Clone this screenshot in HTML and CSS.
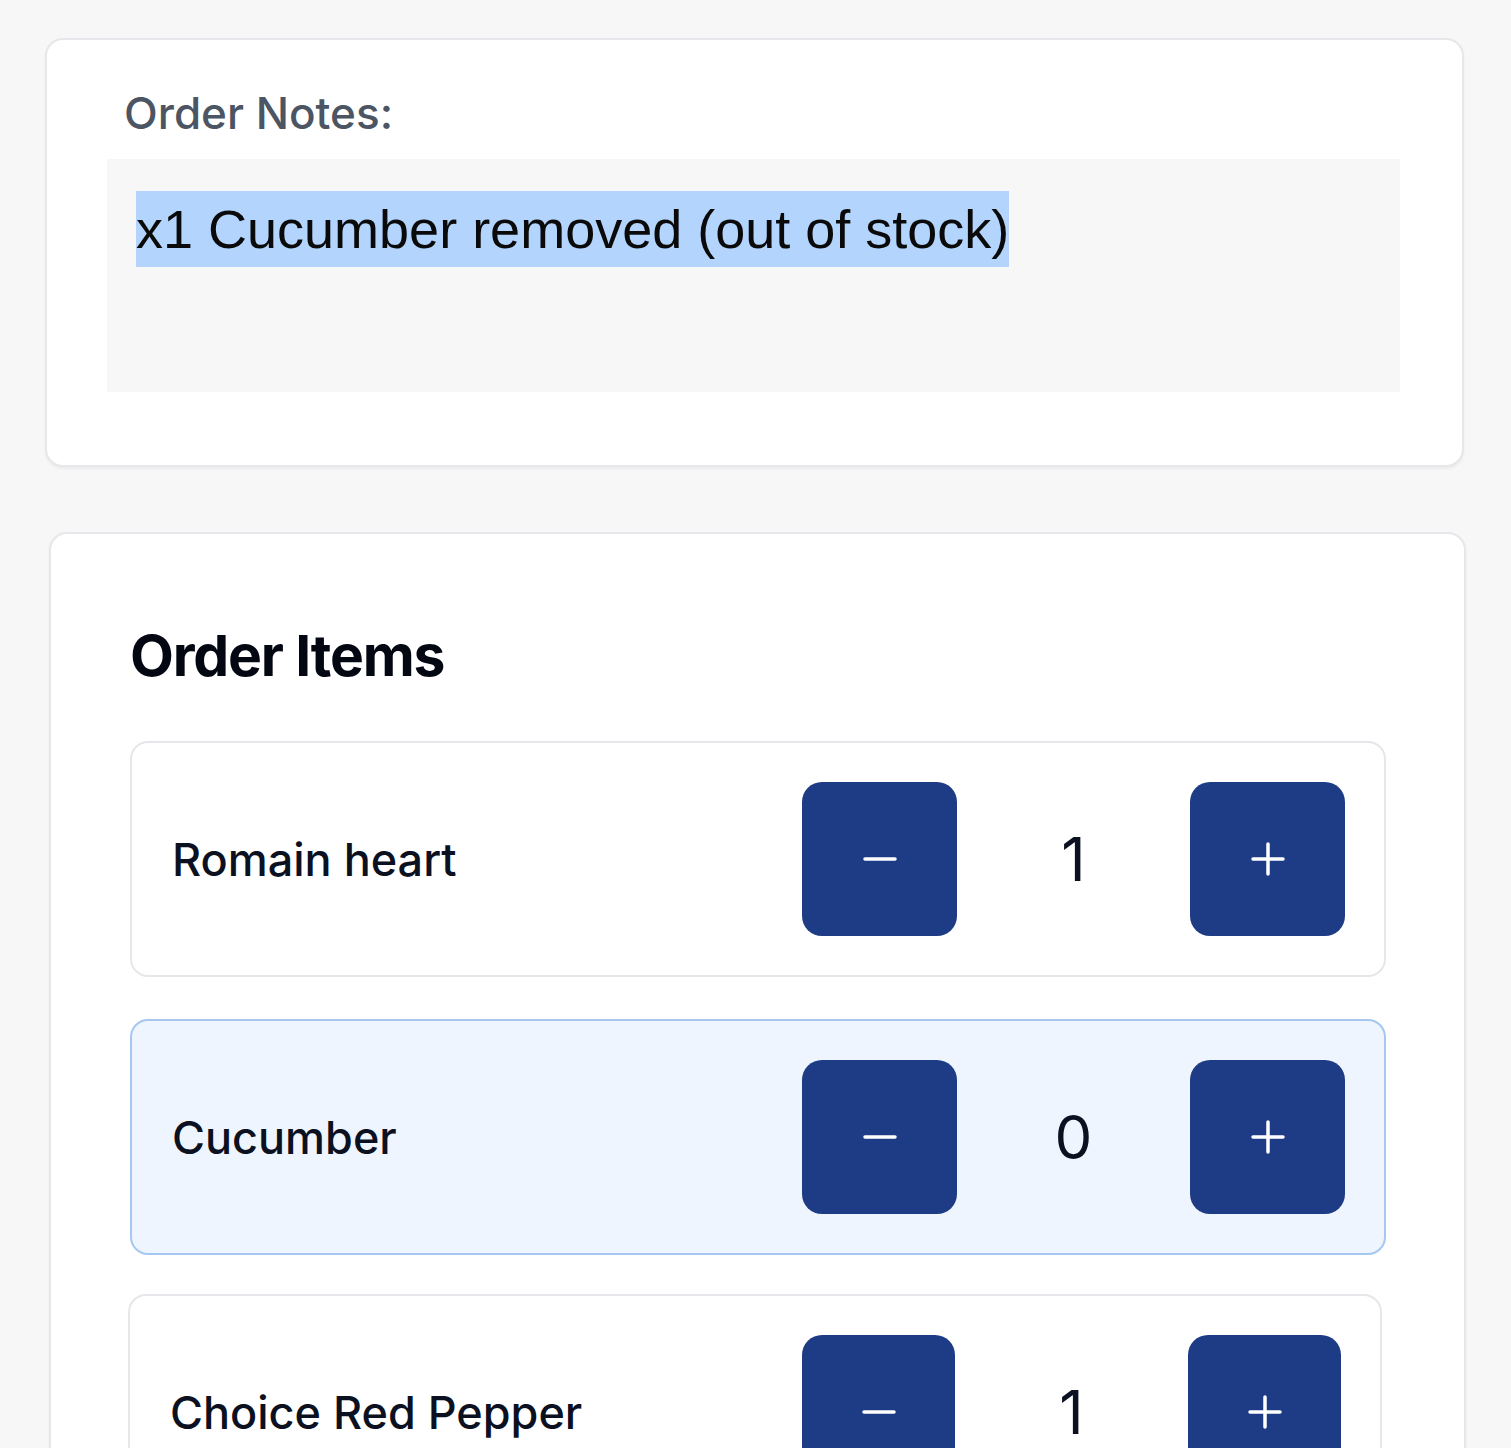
FILE: index.html
```html
<!DOCTYPE html>
<html lang="en">
<head>
<meta charset="utf-8">
<title>Order</title>
<link rel="stylesheet" href="styles.css">
</head>
<body>
<main class="page">
  <section class="card notes-card">
    <label class="notes-label">Order Notes:</label>
    <div class="notes-box"><span class="selected">x1 Cucumber removed (out of stock)</span></div>
  </section>

  <section class="card items-card">
    <h2 class="items-title">Order Items</h2>
    <div class="items">
      <div class="item">
        <span class="item-name">Romain heart</span>
        <div class="stepper">
          <button class="step-btn" aria-label="decrease"><svg viewBox="0 0 40 40"><line x1="5" y1="20" x2="35" y2="20"/></svg></button>
          <span class="qty">1</span>
          <button class="step-btn" aria-label="increase"><svg viewBox="0 0 40 40"><line x1="5" y1="20" x2="35" y2="20"/><line x1="20" y1="5" x2="20" y2="35"/></svg></button>
        </div>
      </div>
      <div class="item item-active">
        <span class="item-name">Cucumber</span>
        <div class="stepper">
          <button class="step-btn" aria-label="decrease"><svg viewBox="0 0 40 40"><line x1="5" y1="20" x2="35" y2="20"/></svg></button>
          <span class="qty">0</span>
          <button class="step-btn" aria-label="increase"><svg viewBox="0 0 40 40"><line x1="5" y1="20" x2="35" y2="20"/><line x1="20" y1="5" x2="20" y2="35"/></svg></button>
        </div>
      </div>
      <div class="item item-last">
        <span class="item-name">Choice Red Pepper</span>
        <div class="stepper">
          <button class="step-btn" aria-label="decrease"><svg viewBox="0 0 40 40"><line x1="5" y1="20" x2="35" y2="20"/></svg></button>
          <span class="qty">1</span>
          <button class="step-btn" aria-label="increase"><svg viewBox="0 0 40 40"><line x1="5" y1="20" x2="35" y2="20"/><line x1="20" y1="5" x2="20" y2="35"/></svg></button>
        </div>
      </div>
    </div>
  </section>
</main>
</body>
</html>
```

FILE: styles.css
```css
* { box-sizing: border-box; }

html, body {
  margin: 0;
  background: #f7f7f7;
  font-family: Inter, "Noto Sans", "Liberation Sans", sans-serif;
  color: #0b1120;
}

.page {
  padding: 38px 47px 0 45px;
  display: flex;
  flex-direction: column;
  gap: 65px;
}

.card {
  background: #ffffff;
  border: 2px solid #e6e7ea;
  border-radius: 18px;
  box-shadow: 0 2px 3px rgba(0, 0, 0, 0.05);
}

.notes-card {
  padding: 47px 62px 73px 60px;
  display: flex;
  flex-direction: column;
  gap: 19px;
}

.notes-label {
  margin-left: 17px;
  font-size: 44px;
  line-height: 53px;
  font-weight: 500;
  color: #4b5563;
}

.notes-box {
  height: 233px;
  background: #f7f7f8;
  padding: 32px 29px;
  font-family: "Liberation Sans", Arial, sans-serif;
  font-size: 54px;
  color: #0a0a0a;
}

.selected {
  display: inline-block;
  line-height: 76px;
  background: #b3d4fc;
}

.items-card {
  margin-left: 4px;
  margin-right: -2px;
  padding: 87px 78px 0 79px;
}

.items-title {
  margin: 0 0 51px;
  font-size: 57px;
  line-height: 69px;
  font-weight: 700;
  letter-spacing: -1.2px;
  color: #030712;
}

.items {
  display: flex;
  flex-direction: column;
  gap: 42px;
}

.item {
  flex-shrink: 0;
  display: flex;
  align-items: center;
  justify-content: space-between;
  height: 236px;
  padding: 39px 39px 39px 40px;
  border: 2px solid #e6e7ea;
  border-radius: 18px;
  background: #ffffff;
}

.item-active {
  background: #eff5ff;
  border-color: #a6c8f0;
}

.item-last {
  margin-top: -3px;
  margin-right: 4px;
  margin-left: -2px;
}

.item-last .step-btn {
  width: 153px;
}

.item-name {
  font-size: 45px;
  font-weight: 500;
  color: #0b1120;
}

.stepper {
  display: flex;
  align-items: center;
}

.step-btn {
  width: 155px;
  height: 154px;
  border: none;
  border-radius: 20px;
  background: #1e3c86;
  display: flex;
  align-items: center;
  justify-content: center;
  padding: 0;
}

.step-btn svg {
  width: 40px;
  height: 40px;
  stroke: #ffffff;
  stroke-width: 3.5;
  stroke-linecap: round;
  fill: none;
}

.qty {
  width: 233px;
  text-align: center;
  font-size: 60px;
  font-weight: 400;
  color: #0b1120;
}
```
